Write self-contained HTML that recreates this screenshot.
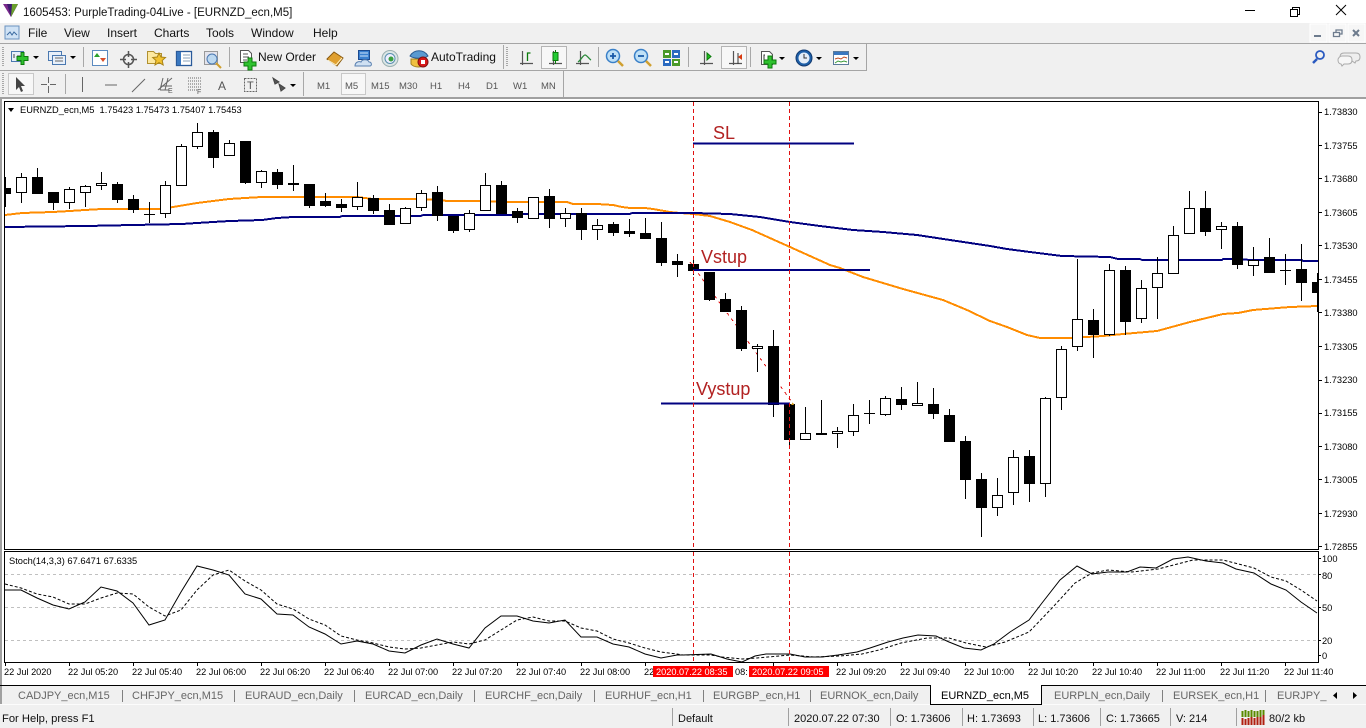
<!DOCTYPE html>
<html><head><meta charset="utf-8"><title>1605453: PurpleTrading-04Live</title>
<style>
html,body{margin:0;padding:0;width:1366px;height:728px;overflow:hidden;background:#f0f0f0}
svg{display:block;position:absolute;left:0;top:0}
text{font-family:"Liberation Sans",sans-serif}
.m{font-size:12px;fill:#111}
.p{font-size:9.3px;fill:#000}
.t{font-size:9.2px;fill:#000}
.tab{font-size:11px;fill:#666}
.st{font-size:11px;fill:#111}
.tf{font-size:9.5px;fill:#555}
</style></head><body>
<svg width="1366" height="728" viewBox="0 0 1366 728" xmlns="http://www.w3.org/2000/svg">
<defs><clipPath id="c"><rect x="5" y="102" width="1313" height="447"/></clipPath><clipPath id="s"><rect x="5" y="552" width="1313" height="110"/></clipPath></defs>
<!-- backgrounds -->
<rect width="1366" height="23" fill="#fff"/>
<rect y="23" width="1366" height="75" fill="#f0f0f0"/>
<rect x="0" y="98" width="1366" height="587" fill="#fff"/>
<rect x="0" y="98" width="2" height="587" fill="#a0a0a0"/>
<rect y="685" width="1366" height="20" fill="#f0f0f0"/>
<rect y="705" width="1366" height="23" fill="#f0f0f0"/>
<!-- title -->
<path d="M3 4L18 4L11 17Z" fill="#7a2a8c"/><path d="M7 4L18 4L11 17Z" fill="#3d1a70"/><path d="M12 4L18 4L11 17Z" fill="#6aa02c"/>
<text x="23" y="16" style="font-size:11.5px" fill="#111">1605453: PurpleTrading-04Live - [EURNZD_ecn,M5]</text>
<path d="M1245 10.5h10" stroke="#000"/><path d="M1290.5 12.5h7v7h-7zM1292.5 12.500v-2h7v7h-2" transform="translate(0,-3)" fill="none" stroke="#000"/><path d="M1336 5l10 10M1346 5l-10 10" stroke="#000"/>
<!-- menu -->
<rect x="5" y="26" width="14" height="13" fill="#cfe2f5" stroke="#6a92c0"/><path d="M7 35l3-3 2 3 2-3 3 3" stroke="#3a6aa0" fill="none"/>
<g><text class="m" x="28" y="37">File</text><text class="m" x="64" y="37">View</text><text class="m" x="107" y="37">Insert</text><text class="m" x="154" y="37">Charts</text><text class="m" x="206" y="37">Tools</text><text class="m" x="251" y="37">Window</text><text class="m" x="313" y="37">Help</text></g>
<rect x="1310" y="24" width="17" height="18" fill="#f6f6f6" stroke="#fff"/><rect x="1329" y="24" width="17" height="18" fill="#f6f6f6" stroke="#fff"/><rect x="1348" y="24" width="17" height="18" fill="#f6f6f6" stroke="#fff"/>
<path d="M1314 36h7" stroke="#6d7b8d" stroke-width="2"/><path d="M1333.5 32.5h6v4h-6zM1336 32v-2h6v4h-2" fill="none" stroke="#6d7b8d" stroke-width="1.3"/><path d="M1353 30l6 6M1359 30l-6 6" stroke="#6d7b8d" stroke-width="2"/>
<!-- toolbar lines -->
<rect y="43" width="1366" height="1" fill="#a5a5a5"/>
<rect x="0" y="44" width="866" height="26" fill="#f0f0f0"/>
<path d="M866.5 44v27" stroke="#a5a5a5"/><rect x="0" y="70" width="866" height="1" fill="#a5a5a5"/>
<path d="M563.5 71v26" stroke="#a5a5a5"/>
<rect y="97" width="1366" height="2" fill="#a0a0a0"/>
<!-- handles -->
<path d="M3 47v20M3 73v22M507 47v20" stroke="#a8a8a8" stroke-width="2" stroke-dasharray="1 1"/>
<path d="M83.5 47v20M229.5 47v20M503.5 45v24M598.5 47v20M688.5 47v20M750.5 47v20M65.5 74v20M303.5 72v24" stroke="#a8a8a8"/>
<!-- row 1 icons -->
<g fill="none">
<rect x="11.5" y="51.5" width="12" height="10" fill="#e8f0fa" stroke="#4a78b0"/><path d="M14 54v4M17 56h5" stroke="#444"/>
<path d="M21 53h3v4h4v4h-4v4h-3v-4h-4v-4h4z" transform="translate(0,-0.5)" fill="#2ec22e" stroke="#0d7a0d"/>
<path d="M33 56h6l-3 3z" fill="#000"/>
<rect x="48.5" y="51.5" width="13" height="9" fill="#e8f0fa" stroke="#4a78b0"/><rect x="52.5" y="55.5" width="13" height="9" fill="#e8f0fa" stroke="#4a78b0"/><path d="M55 58h8M55 61h8" stroke="#666"/>
<path d="M70 56h6l-3 3z" fill="#000"/>
<rect x="92.5" y="50.5" width="15" height="15" fill="#fff" stroke="#5a8ac0"/><path d="M97 53l3 4h-6z" fill="#2ba02b"/><path d="M103 62l-3-4h6z" fill="#d8502a"/>
<circle cx="128.5" cy="59.5" r="5" stroke="#555" stroke-width="1.5"/><path d="M128.5 51v6M128.5 62v6M120 59.5h6M131 59.5h6" stroke="#555" stroke-width="1.5"/>
<path d="M147.5 51.5h6l2 2h6v10h-14z" fill="#fde9a0" stroke="#b09030"/><path d="M159 53l2 4 4.5.5-3.300 3 1 4.500-4.200-2.400-4 2.400 1-4.500-3.300-3 4.500-.5z" fill="#f2c230" stroke="#a88318"/>
<rect x="176.5" y="51.500" width="15" height="14" fill="#fff" stroke="#2a5a9a" stroke-width="1.300"/><path d="M177 52h4v13h-4z" fill="#3a78c0"/><path d="M183 55h7M183 58h7M183 61h7" stroke="#8aa0b8"/>
<rect x="204.500" y="51.500" width="13" height="13" fill="#e4e4ec" stroke="#999"/><circle cx="212" cy="59" r="5" fill="#bcd8f0" stroke="#4a78b0"/><path d="M216 63l5 5" stroke="#d0a030" stroke-width="2"/>
<path d="M240.500 50.500h8l3 3v9h-11z" fill="#fff" stroke="#555"/><path d="M243 54h5M243 57h6M243 60h4" stroke="#555"/>
<path d="M248 58h4v4h4v4h-4v4h-4v-4h-4v-4h4z" fill="#2ec22e" stroke="#0d7a0d"/>
<path d="M327 59l7-7 9 6-6 8z" fill="#e0a030" stroke="#8a5a10"/><path d="M328 60l8 5 6-7" stroke="#fff1c0"/>
<rect x="358.500" y="50.500" width="11" height="9" fill="#3a80d0" stroke="#1a4a90"/><path d="M360 53h8M360 56h8" stroke="#cfe4fa"/><path d="M355 66c0-4 4-5 6-4 1-3 7-3 8 0 3 0 3 4 1 4z" fill="#cfe0f2" stroke="#5a80b0"/>
<circle cx="390" cy="58.500" r="8" fill="#dce6e6" stroke="#9ab0b0"/><circle cx="390" cy="58.500" r="5" stroke="#5a90b0" fill="#eef"/><circle cx="391" cy="59" r="2.500" fill="#3aa040"/>
<path d="M411 59v5c3 4 12 4 15 0v-5z" fill="#f0c040" stroke="#a08020"/><path d="M410 56c4-7 14-7 18 0-4 3-14 3-18 0z" fill="#5a9ad0" stroke="#2a5a90"/><circle cx="423" cy="62" r="5" fill="#d81818" stroke="#801010"/><rect x="421" y="60" width="4" height="4" fill="#fff"/>
<!-- chart type -->
<rect x="541.500" y="46.500" width="25" height="22" fill="#f7f7f7" stroke="#b4b4b4"/><rect x="721.500" y="46.500" width="25" height="22" fill="#f7f7f7" stroke="#b4b4b4"/>
<path d="M522.500 51v14M520 63.500h13M553.500 51v14M549 63.500h13M580.500 51v14M576 63.500h13M704.500 51v14M700 63.500h13M733.500 51v14M729 63.500h13" stroke="#555" stroke-width="1.200"/>
<path d="M527.500 61v-8h3" stroke="#0a7a0a" stroke-width="1.300"/>
<path d="M555.500 50v14" stroke="#0a7a0a"/><rect x="553" y="52.500" width="5" height="8" fill="#22cc33" stroke="#0a7a0a"/>
<path d="M578 62c3-2 5-7 7-7 2 0 4 4 6 5" stroke="#2a8a3a" stroke-width="1.300"/>
<path d="M707 53v7l4-3.500z" fill="#20c020" stroke="#0a7a0a"/>
<path d="M738 53v11" stroke="#333"/><path d="M742 54v6l-4-3z" fill="#d83a10"/>
<circle cx="613" cy="56" r="6.500" fill="#bfe0f6" stroke="#3a80c8" stroke-width="1.500"/><path d="M610 56h6M613 53v6" stroke="#1a5aa8" stroke-width="1.800"/><path d="M618 61l5 5" stroke="#d0a030" stroke-width="2.500"/>
<circle cx="641" cy="56" r="6.500" fill="#bfe0f6" stroke="#3a80c8" stroke-width="1.500"/><path d="M638 56h6" stroke="#1a5aa8" stroke-width="1.800"/><path d="M646 61l5 5" stroke="#d0a030" stroke-width="2.500"/>
<rect x="663" y="50" width="8" height="8" fill="#4a9a2a"/><rect x="672" y="50" width="8" height="8" fill="#2a6ac0"/><rect x="663" y="59" width="8" height="7" fill="#2a6ac0"/><rect x="672" y="59" width="8" height="7" fill="#4a9a2a"/><path d="M665 54h4M674 54h4M665 62h4M674 62h4" stroke="#fff" stroke-width="2"/>
<path d="M761.500 51.500h8l3 3v10h-11z" fill="#fff" stroke="#555"/><path d="M765 55h-1v8" stroke="#333"/><path d="M768 56h4v4h4v4h-4v4h-4v-4h-4v-4h4z" fill="#2ec22e" stroke="#0d7a0d"/>
<path d="M779 57h6l-3 3z" fill="#000"/>
<circle cx="804" cy="58" r="8" fill="#1d5fa8" stroke="#123a70"/><circle cx="804" cy="58" r="5.500" fill="#e4eef8"/><path d="M804 54v4h3" stroke="#333"/>
<path d="M816 57h6l-3 3z" fill="#000"/>
<rect x="833.500" y="51.500" width="15" height="13" fill="#fff" stroke="#5a7a9a"/><rect x="834" y="52" width="14" height="3" fill="#3a78c0"/><path d="M835 59l3-1 3 1 3-2 3 1" stroke="#c04a20"/><path d="M835 63l3-2 3 1 3-1 3 1" stroke="#3a9a3a"/>
<path d="M853 57h6l-3 3z" fill="#000"/>
<!-- right icons -->
<circle cx="1320" cy="55" r="4" stroke="#2a5ac0" stroke-width="1.800"/><path d="M1317 59l-4 4" stroke="#2a5ac0" stroke-width="2.500"/>
<path d="M1344 53h12c3 0 4 2 4 4s-1 4-4 4l-1 2-3-2h-8c-3 0-4-2-4-4s1-4 4-4z" fill="#eee" stroke="#aaa"/><path d="M1342 56h6c3 0 4 2 4 4s-1 4-4 4h-4l-2 2-1-2c-2 0-3-2-3-4s2-4 4-4z" fill="#f6f6f6" stroke="#aaa"/>
<!-- row 2 -->
<rect x="8.500" y="73.500" width="25" height="21" fill="#f7f7f7" stroke="#c8c8c8"/>
<path d="M16 77v13l3-3 2 5 2-1-2-5h4z" fill="#444"/>
<path d="M48.500 77v6M48.500 86v7M41 84.500h6M50 84.500h6" stroke="#666"/>
<path d="M82.500 77v15M105 85h12M132 92l13-13" stroke="#666"/>
<path d="M158 90l14-12M161 86h11M160 90h9M163 78l-3 12M168 78l-3 12" stroke="#666"/>
<path d="M188 78h14M188 81h14M188 84h14M188 87h14M188 90h9" stroke="#666" stroke-dasharray="1 1"/>
<rect x="244.500" y="78.500" width="12" height="13" stroke="#666" stroke-dasharray="2 1"/>
<path d="M273 78l6 4-4 2zM279 84l6 4-4 3z" fill="#555" stroke="#444"/>
<path d="M290 84h6l-3 3z" fill="#000"/>
<rect x="341.500" y="73.500" width="24" height="21" fill="#f7f7f7" stroke="#c8c8c8"/>
</g>
<text x="258" y="61" style="font-size:12px" fill="#111">New Order</text>
<text x="431" y="61" style="font-size:12px" fill="#111">AutoTrading</text>
<text x="168" y="93" style="font-size:7px" fill="#555">E</text>
<text x="197" y="94" style="font-size:7px" fill="#555">F</text>
<text x="218" y="90" style="font-size:12px" fill="#555">A</text>
<text x="247" y="89" style="font-size:11px" fill="#555">T</text>
<text class="tf" x="317" y="89">M1</text><text class="tf" x="345" y="89">M5</text><text class="tf" x="371" y="89">M15</text><text class="tf" x="399" y="89">M30</text><text class="tf" x="430" y="89">H1</text><text class="tf" x="458" y="89">H4</text><text class="tf" x="486" y="89">D1</text><text class="tf" x="513" y="89">W1</text><text class="tf" x="541" y="89">MN</text>
<!-- frames -->
<path d="M4.500 101.500H1318.500V549.500H4.500Z" fill="#fff" stroke="#000"/>
<path d="M4.500 551.500H1318.500V662.500H4.500Z" fill="#fff" stroke="#000"/>
<!-- main chart -->
<g clip-path="url(#c)" shape-rendering="crispEdges" fill="none">
<path d="M5 215L22 213L53 212L70 211L85 210L102 209L160 209L173 207L197 203L213 201L229 199L245 198L262 197L293 197L340 197L357 197L373 199L420 199L440 200L447 201L480 201L507 202L567 202L573 204L597 204L613 205L622 207L630 208L645 208L653 209L670 212L680 213L693 214L710 216L730 222L752 230L790 247L830 265L840 268L863 277L903 289L943 300L967 310L990 321L1007 327L1027 335L1040 338L1070 338L1103 336L1123 334L1157 331L1190 322L1223 314L1238 313L1253 310L1290 307L1318 306" stroke="#ff8c00" stroke-width="2"/>
<path d="M5 227L86 226L133 225L182 224L197 223L213 222L230 221L262 220L277 218L293 217L340 217L342 216L421 216L423 215L513 215L520 214L630 214L632 213L693 213L730 214L760 217L790 222L820 226L853 230L883 232L917 235L950 240L990 246L1007 249L1030 252L1062 256L1110 257L1118 259L1140 259L1142 260L1222 260L1223 259L1240 259L1250 260L1302 260L1303 261L1318 261" stroke="#000080" stroke-width="2"/>
<path d="M690 262L792 402" stroke="#e01010" stroke-dasharray="3 4"/>
<path d="M5.500 177V207M21.500 173V203M37.500 168V194M53.500 192V210M69.500 187V209M85.500 185V207M101.500 172V190M117.500 182V203M133.500 195V213M149.500 202V223M165.500 181V218M181.500 144V186M197.500 123V149M213.500 130V168M229.500 140V156M245.500 141V184M261.500 170V188M277.500 169V189M293.500 165V191M309.500 184V208M325.500 193V207M341.500 199V212M357.500 182V210M373.500 195V214M389.500 204V225M405.500 207V224M421.500 190V211M437.500 186V221M453.500 216V233M469.500 210V232M485.500 173V211M501.500 181V214M517.500 208V223M533.500 197V219M549.500 189V228M565.500 208V227M581.500 208V240M597.500 219V240M613.500 222V236M629.500 219V237M645.500 218V239M661.500 222V266M677.500 254V277M693.500 259V275M709.500 272V301M725.500 293V312M741.500 306V351M757.500 344V372M773.500 330V417M789.500 404V446M805.500 407V440M821.500 400V435M837.500 427V448M853.500 404V436M869.500 400V424M885.500 396V416M901.500 387V410M917.500 382V406M933.500 388V419M949.500 409V442M965.500 436V499M981.500 473V537M997.500 478V516M1013.500 450V505M1029.500 450V502M1045.500 397V497M1061.500 346V410M1077.500 259V351M1093.500 309V358M1109.500 264V336M1125.500 266V335M1141.500 280V323M1157.500 257V319M1173.500 226V274M1189.500 191V234M1205.500 191V236M1221.500 222V249M1237.500 222V269M1253.500 247V276M1269.500 238V273M1285.500 254V285M1301.500 244V301M1317.500 273V312" stroke="#000"/>
<path d="M5 188h6v6h-6zM32 177h11v17h-11zM48 192h11v11h-11zM112 184h11v16h-11zM128 199h11v11h-11zM208 132h11v26h-11zM240 141h11v42h-11zM272 172h11v13h-11zM288 183h11v2h-11zM304 184h11v22h-11zM320 201h11v5h-11zM336 204h11v4h-11zM368 198h11v13h-11zM384 210h11v15h-11zM432 192h11v24h-11zM448 216h11v15h-11zM496 185h11v29h-11zM512 211h11v7h-11zM544 196h11v23h-11zM576 213h11v17h-11zM608 224h11v9h-11zM624 231h11v3h-11zM640 233h11v6h-11zM656 238h11v25h-11zM672 261h11v4h-11zM688 264h11v7h-11zM704 272h11v28h-11zM720 299h11v13h-11zM736 310h11v39h-11zM768 346h11v59h-11zM784 404h11v36h-11zM816 433h11v2h-11zM896 399h11v6h-11zM928 404h11v10h-11zM944 415h11v27h-11zM960 441h11v39h-11zM976 479h11v29h-11zM1024 456h11v28h-11zM1088 320h11v15h-11zM1120 270h11v52h-11zM1200 208h11v24h-11zM1232 226h11v39h-11zM1264 257h11v16h-11zM1296 269h11v14h-11zM1312 282h6v11h-6zM144 214h11v1h-11zM864 413h11v1h-11zM1280 270h11v1h-11z" fill="#000"/>
<path d="M16.500 177.500h10v15h-10zM64.500 189.500h10v13h-10zM80.500 186.500h10v6h-10zM96.500 183.500h10v2h-10zM160.500 185.500h10v28h-10zM176.500 146.500h10v39h-10zM192.500 132.500h10v14h-10zM224.500 143.500h10v12h-10zM256.500 171.500h10v11h-10zM352.500 197.500h10v9h-10zM400.500 208.500h10v15h-10zM416.500 193.500h10v14h-10zM464.500 213.500h10v16h-10zM480.500 185.500h10v25h-10zM528.500 197.500h10v21h-10zM560.500 213.500h10v5h-10zM592.500 225.500h10v4h-10zM752.500 346.500h10v2h-10zM800.500 433.500h10v6h-10zM832.500 431.500h10v2h-10zM848.500 415.500h10v16h-10zM880.500 398.500h10v16h-10zM912.500 403.500h10v2h-10zM992.500 495.500h10v12h-10zM1008.500 457.500h10v35h-10zM1040.500 398.500h10v85h-10zM1056.500 349.500h10v48h-10zM1072.500 319.500h10v27h-10zM1104.500 270.500h10v64h-10zM1136.500 288.500h10v30h-10zM1152.500 273.500h10v14h-10zM1168.500 235.500h10v38h-10zM1184.500 208.500h10v25h-10zM1216.500 226.500h10v3h-10zM1248.500 260.500h10v5h-10z" fill="#fff" stroke="#000"/>
<path d="M693 143.500H854M693 270H870M661 403.500H790" stroke="#000080" stroke-width="2"/>
<path d="M791 405l2-3 1 3z" fill="#d8a020"/>
</g>
<text x="713" y="139" style="font-size:18px" fill="#b22222">SL</text>
<text x="701" y="263" style="font-size:18px" fill="#b22222">Vstup</text>
<text x="696" y="395" style="font-size:18px" fill="#b22222">Vystup</text>
<path d="M8 108h6l-3 4z" fill="#000"/>
<text class="p" x="20" y="113" xml:space="preserve">EURNZD_ecn,M5  1.75423 1.75473 1.75407 1.75453</text>
<!-- stochastic -->
<g clip-path="url(#s)" fill="none">
<path d="M5 574.500H1318M5 607.500H1318M5 640.500H1318" stroke="#c0c0c0" stroke-dasharray="3 3"/>
<path d="M5 590L21 590L37 598L53 605L69 609L85 602L101 587L117 591L133 603L149 625L165 620L181 592L197 566L213 570L229 575L245 594L261 599L277 614L293 615L309 627L325 634L341 644L357 641L373 644L389 651L405 653L421 645L437 639L453 644L469 648L485 628L501 616L517 616L533 621L549 623L565 620L581 637L597 637L613 644L629 647L645 654L661 658L677 655L683 655L711 654L727 659L742 662L755 656L766 654L790 654L805 657L822 657L838 655L857 652L870 648L888 642L903 638L918 635L936 636L949 642L964 648L981 650L994 644L1010 632L1029 620L1042 603L1060 580L1077 566L1092 574L1108 572L1127 572L1140 567L1156 568L1173 559L1188 557L1206 561L1223 563L1236 569L1254 573L1271 584L1286 590L1301 602L1317 613" stroke="#000"/>
<path d="M5 584L21 588L37 594L53 597L69 604L85 604L101 598L117 593L133 594L149 607L165 616L181 610L197 590L213 575L229 570L245 581L261 590L277 604L293 609L309 619L325 625L341 636L357 640L373 643L389 647L405 649L421 648L437 645L453 642L469 644L485 640L501 630L517 620L533 617L549 621L565 621L581 628L597 631L613 639L629 643L645 648L661 652L677 654L683 655L711 655L722 657L742 659L757 658L790 655L814 657L840 656L862 654L879 650L901 643L927 638L949 638L966 643L986 647L1005 642L1029 632L1053 607L1075 583L1092 573L1108 570L1132 572L1158 569L1193 560L1223 560L1254 568L1271 577L1286 581L1301 590L1317 601" stroke="#000" stroke-dasharray="3 2"/>
</g>
<!-- vertical lines -->
<path d="M693.500 102V549M789.500 102V549M693.500 552V662M789.500 552V662" stroke="#e01010" stroke-dasharray="4 3"/>
<text class="p" x="9" y="564">Stoch(14,3,3) 67.6471 67.6335</text>
<!-- price axis -->
<path d="M1318 112.500h4M1318 145.500h4M1318 178.500h4M1318 212.500h4M1318 245.500h4M1318 279.500h4M1318 312.500h4M1318 346.500h4M1318 380.500h4M1318 413.500h4M1318 446.500h4M1318 479.500h4M1318 513.500h4M1318 546.500h4M1318 558.500h3M1318 574.500h3M1318 607.500h3M1318 640.500h3M1318 655.500h3" stroke="#000"/>
<g><text class="p" x="1324" y="115">1.73830</text><text class="p" x="1324" y="149">1.73755</text><text class="p" x="1324" y="182">1.73680</text><text class="p" x="1324" y="216">1.73605</text><text class="p" x="1324" y="249">1.73530</text><text class="p" x="1324" y="283">1.73455</text><text class="p" x="1324" y="316">1.73380</text><text class="p" x="1324" y="350">1.73305</text><text class="p" x="1324" y="383">1.73230</text><text class="p" x="1324" y="416">1.73155</text><text class="p" x="1324" y="450">1.73080</text><text class="p" x="1324" y="483">1.73005</text><text class="p" x="1324" y="517">1.72930</text><text class="p" x="1324" y="550">1.72855</text>
<text class="p" x="1322" y="562">100</text><text class="p" x="1322" y="579">80</text><text class="p" x="1322" y="611">50</text><text class="p" x="1322" y="644">20</text><text class="p" x="1322" y="659">0</text></g>
<!-- time axis -->
<path d="M5.500 663v3M69.500 663v3M133.500 663v3M197.500 663v3M261.500 663v3M325.500 663v3M389.500 663v3M453.500 663v3M517.500 663v3M581.500 663v3M645.500 663v3M709.500 663v3M773.500 663v3M837.500 663v3M901.500 663v3M965.500 663v3M1029.500 663v3M1093.500 663v3M1157.500 663v3M1221.500 663v3M1285.500 663v3" stroke="#000"/>
<g><text class="t" x="4" y="675">22 Jul 2020</text><text class="t" x="68" y="675">22 Jul 05:20</text><text class="t" x="132" y="675">22 Jul 05:40</text><text class="t" x="196" y="675">22 Jul 06:00</text><text class="t" x="260" y="675">22 Jul 06:20</text><text class="t" x="324" y="675">22 Jul 06:40</text><text class="t" x="388" y="675">22 Jul 07:00</text><text class="t" x="452" y="675">22 Jul 07:20</text><text class="t" x="516" y="675">22 Jul 07:40</text><text class="t" x="580" y="675">22 Jul 08:00</text><text class="t" x="644" y="675">22</text><text class="t" x="735" y="675">08:</text><text class="t" x="836" y="675">22 Jul 09:20</text><text class="t" x="900" y="675">22 Jul 09:40</text><text class="t" x="964" y="675">22 Jul 10:00</text><text class="t" x="1028" y="675">22 Jul 10:20</text><text class="t" x="1092" y="675">22 Jul 10:40</text><text class="t" x="1156" y="675">22 Jul 11:00</text><text class="t" x="1220" y="675">22 Jul 11:20</text><text class="t" x="1284" y="675">22 Jul 11:40</text></g>
<rect x="653" y="666" width="80" height="11" fill="#f00"/><rect x="749" y="666" width="80" height="11" fill="#f00"/>
<text class="t" x="656" y="675" style="fill:#fff">2020.07.22 08:35</text><text class="t" x="752" y="675" style="fill:#fff">2020.07.22 09:05</text>
<!-- tabs -->
<rect y="685" width="1366" height="1" fill="#000"/>
<rect x="0" y="686" width="2" height="19" fill="#a0a0a0"/>
<path d="M122.500 690v12M234.500 690v12M354.500 690v12M474.500 690v12M594.500 690v12M703.500 690v12M810.500 690v12M1162.500 690v12M1265.500 690v12" stroke="#808080"/>
<path d="M930.500 685.500V704.500H1041.500V685.500" fill="#fff" stroke="#000"/><rect x="931" y="685" width="110" height="19" fill="#fff"/><rect x="930" y="704" width="112" height="1" fill="#000"/>
<text class="tab" x="18" y="699">CADJPY_ecn,M15</text><text class="tab" x="132" y="699">CHFJPY_ecn,M15</text><text class="tab" x="245" y="699">EURAUD_ecn,Daily</text><text class="tab" x="365" y="699">EURCAD_ecn,Daily</text><text class="tab" x="485" y="699">EURCHF_ecn,Daily</text><text class="tab" x="605" y="699">EURHUF_ecn,H1</text><text class="tab" x="713" y="699">EURGBP_ecn,H1</text><text class="tab" x="820" y="699">EURNOK_ecn,Daily</text><text class="tab" x="941" y="699" style="fill:#000">EURNZD_ecn,M5</text><text class="tab" x="1054" y="699">EURPLN_ecn,Daily</text><text class="tab" x="1173" y="699">EURSEK_ecn,H1</text><text class="tab" x="1277" y="699">EURJPY_e</text>
<rect x="1327" y="686" width="39" height="18" fill="#f0f0f0"/>
<path d="M1337 692l-4 3.500 4 3.500zM1353 692l4 3.500-4 3.500z" fill="#000"/>
<!-- status -->
<rect y="704" width="930" height="1" fill="#fcfcfc"/><rect x="1042" y="704" width="324" height="1" fill="#fcfcfc"/>
<path d="M672.500 708v18M788.500 708v18M890.500 708v18M962.500 708v18M1033.500 708v18M1100.500 708v18M1170.500 708v18M1236.500 708v18" stroke="#a0a0a0"/>
<text class="st" x="2" y="722" style="font-size:11.2px">For Help, press F1</text><text class="st" x="678" y="722">Default</text><text class="st" x="794" y="722">2020.07.22 07:30</text><text class="st" x="896" y="722">O: 1.73606</text><text class="st" x="967" y="722">H: 1.73693</text><text class="st" x="1038" y="722">L: 1.73606</text><text class="st" x="1106" y="722">C: 1.73665</text><text class="st" x="1176" y="722">V: 214</text><text class="st" x="1269" y="722">80/2 kb</text>
<path d="M1242.500 717v-6M1245.500 717v-7M1248.500 717v-6M1251.500 717v-7M1254.500 717v-6M1257.500 717v-6M1260.500 717v-7M1263.500 717v-7" stroke="#5a8a00" stroke-width="2"/>
<path d="M1242.500 725v-7M1245.500 725v-6M1248.500 725v-7M1251.500 725v-8M1254.500 725v-7M1257.500 725v-8M1260.500 725v-8M1263.500 725v-10" stroke="#b02010" stroke-width="2"/>
</svg>
</body></html>
